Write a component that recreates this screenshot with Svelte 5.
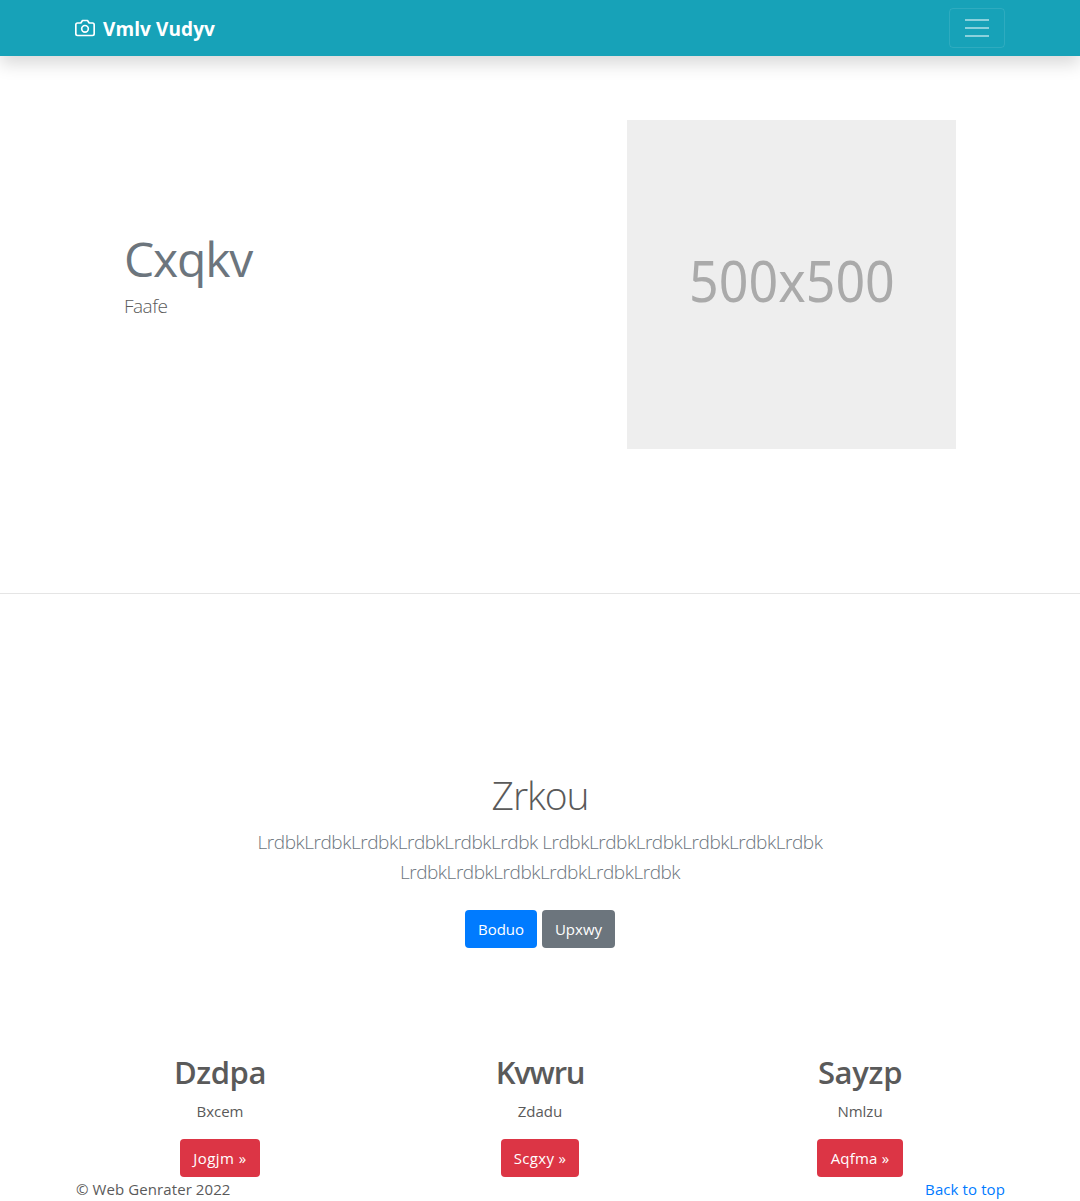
<script>
  const features = [
    { title: 'Dzdpa', text: 'Bxcem', action: 'Jogjm »', key: 'first' },
    { title: 'Kvwru', text: 'Zdadu', action: 'Scgxy »', key: 'second' },
    { title: 'Sayzp', text: 'Nmlzu', action: 'Aqfma »', key: 'third' }
  ];
  const word = 'Lrdbk'.repeat(6);
</script>

<header>
  <div class="bar">
    <a class="brand" href="#top">
      <svg width="20" height="20" viewBox="0 0 24 24" fill="none" stroke="currentColor" stroke-width="2" stroke-linecap="round" stroke-linejoin="round" aria-hidden="true">
        <path d="M23 19a2 2 0 0 1-2 2H3a2 2 0 0 1-2-2V8a2 2 0 0 1 2-2h4l2-3h6l2 3h4a2 2 0 0 1 2 2z" />
        <circle cx="12" cy="13" r="4" />
      </svg>
      <strong>Vmlv Vudyv</strong>
    </a>
    <button class="toggler" aria-label="Toggle navigation">
      <svg width="30" height="30" viewBox="0 0 30 30" stroke="currentColor" stroke-width="2" stroke-miterlimit="10">
        <path d="M3 7h24M3 15h24M3 23h24" />
      </svg>
    </button>
  </div>
</header>

<main>
  <section class="hero">
    <div class="intro">
      <h1>Cxqkv</h1>
      <p>Faafe</p>
    </div>
    <div class="placeholder"><span>500x500</span></div>
  </section>

  <section class="callout">
    <h2>Zrkou</h2>
    <p>{word} {word} {word}</p>
    <div class="actions">
      <button class="btn primary">Boduo</button>
      <button class="btn secondary">Upxwy</button>
    </div>
  </section>

  <section class="features">
    {#each features as item}
      <article>
        <h3 class={item.key}>{item.title}</h3>
        <p>{item.text}</p>
        <button class="btn danger {item.key}">{item.action}</button>
      </article>
    {/each}
  </section>
</main>

<footer>
  <span class="copy">© Web Genrater 2022</span>
  <a href="#top">Back to top</a>
</footer>

<style>
  :global(body) {
    background: #fff;
    color: #5a5a5a;
    font: 400 16px/24px "Segoe UI", "Open Sans", "Noto Sans", sans-serif;
    overflow: hidden;
  }
  h1, h2, h3, p { margin: 0; }
  a { text-decoration: none; }
  button { font: inherit; }
  header {
    height: 56px;
    background: #17a2b8;
    box-shadow: 0 8px 16px rgba(0, 0, 0, 0.15);
  }
  .bar {
    height: 56px;
    padding: 0 75px;
    display: flex;
    align-items: center;
    justify-content: space-between;
  }
  .brand {
    display: flex;
    align-items: center;
    gap: 8px;
    color: #fff;
    font-size: 19px;
    line-height: 30px;
  }
  .brand strong { font-weight: 750; letter-spacing: 0.1px; padding-top: 1px; }
  .toggler {
    width: 56px;
    height: 40px;
    padding: 0;
    display: grid;
    place-items: center;
    background: transparent;
    border: 1px solid rgba(255, 255, 255, 0.1);
    border-radius: 4px;
    color: rgba(255, 255, 255, 0.5);
  }
  .hero {
    height: 473px;
    padding: 64px 124px 0;
    border-bottom: 1px solid #e5e5e5;
    display: flex;
    justify-content: space-between;
    align-items: flex-start;
  }
  .intro { padding-top: 109px; }
  .intro h1 {
    color: #6c757d;
    font-size: 48px;
    font-weight: 400;
    line-height: 60px;
    letter-spacing: -1.2px;
  }
  .intro p {
    font-size: 19px;
    font-weight: 300;
    line-height: 30px;
    letter-spacing: -0.5px;
    padding-top: 2px;
  }
  .placeholder {
    width: 329px;
    height: 320px;
    padding-bottom: 9px;
    background: #eee;
    color: #aaa;
    display: grid;
    place-items: center;
    font: 400 56px/60px "Noto Sans", sans-serif;
  }
  .placeholder span { transform: scaleX(0.928); }
  .callout {
    padding-top: 177px;
    height: 265px;
    display: flex;
    flex-direction: column;
    align-items: center;
    text-align: center;
  }
  .callout h2 {
    font-size: 39px;
    font-weight: 300;
    line-height: 48px;
    letter-spacing: -1.1px;
  }
  .callout p {
    width: 610px;
    margin-top: 8px;
    color: #6c757d;
    font-size: 19px;
    font-weight: 300;
    line-height: 30px;
    letter-spacing: -0.45px;
  }
  .actions { display: flex; gap: 5px; margin-top: 23px; }
  .btn {
    height: 38px;
    padding: 0;
    border: 0;
    border-radius: 4px;
    color: #fff;
    font-size: 15px;
    white-space: nowrap;
  }
  .primary { width: 72px; background: #007bff; }
  .secondary { width: 73px; background: #6c757d; }
  .danger { background: #dc3545; }
  .danger.first { width: 80px; letter-spacing: 0.45px; }
  .danger.second { width: 78px; letter-spacing: 0.3px; }
  .danger.third { width: 86px; letter-spacing: 0.2px; }
  .features {
    padding: 17px 60px 0;
    display: grid;
    grid-template-columns: repeat(3, 1fr);
  }
  article {
    display: flex;
    flex-direction: column;
    align-items: center;
  }
  h3 {
    font-size: 31px;
    font-weight: 600;
    line-height: 38px;
  }
  h3.first { letter-spacing: -0.4px; }
  h3.second { letter-spacing: -1.2px; }
  h3.third { letter-spacing: -0.3px; }
  article p { margin: 8px 0 16px; font-size: 15px; }
  footer {
    display: flex;
    justify-content: space-between;
    padding: 0 75px 0 76px;
    font-size: 15px;
    height: 24px;
  }
  .copy { letter-spacing: 0.09px; }
  footer a { color: #007bff; letter-spacing: 0.1px; }
</style>
